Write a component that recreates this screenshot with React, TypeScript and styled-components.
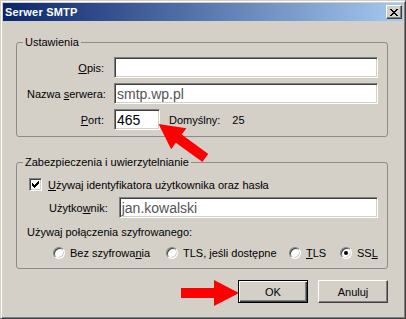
import React from "react";
import styled, {createGlobalStyle} from "styled-components";

//=============== GLOBAL ==================
const GlobalStyle = createGlobalStyle`
  html, body {
    margin: 0;
    padding: 0;
    background: #d4d0c8;
  }
  body {
    font-family: "Liberation Sans", Arial, sans-serif;
    font-size: 11px;
    color: #000;
  }
  * {
    box-sizing: border-box;
  }
`;

//=============== STYLED ==================
const Window = styled.div`
  position: relative;
  width: 406px;
  height: 319px;
  padding: 2px;
  background: #d4d0c8;
  border: 1px solid;
  border-color: #d4d0c8 #404040 #404040 #d4d0c8;
  box-shadow: inset 1px 1px #fff, inset -1px -1px #808080;
  display: flex;
  flex-direction: column;
`;

const TitleBar = styled.div`
  height: 18px;
  display: flex;
  align-items: center;
  justify-content: space-between;
  padding: 0 1px 0 2px;
  background: linear-gradient(to right, #0a246a, #a6caf0);
`;

const Title = styled.span`
  color: #fff;
  font-weight: bold;
  font-size: 11px;
  letter-spacing: 0.2px;
`;

const CloseButton = styled.div`
  width: 16px;
  height: 14px;
  display: flex;
  align-items: center;
  justify-content: center;
  background: #d4d0c8;
  border: 1px solid;
  border-color: #fff #404040 #404040 #fff;
  box-shadow: inset -1px -1px #808080;
`;

const Content = styled.div`
  padding: 15px 15px 0 13px;
  display: flex;
  flex-direction: column;
`;

const GroupBox = styled.fieldset<{ $gap?: number }>`
  margin: ${p => p.$gap ?? 0}px 0 0 0;
  padding: 0;
  min-width: 0;
  width: 372px;
  border: 1px solid #8c8c8c;
  border-radius: 3px;
`;

const Legend = styled.legend`
  margin-left: 6px;
  padding: 0 2px;
  line-height: 13px;
  font-size: 11px;
`;

const ServerGrid = styled.div`
  display: grid;
  grid-template-columns: 77px 1fr;
  column-gap: 10px;
  row-gap: 5px;
  padding: 8px 9px 6px 10px;
  align-items: center;
`;

const Label = styled.label`
  text-align: right;
  white-space: nowrap;
`;

const TextBox = styled.div<{ $width?: number; $dim?: boolean }>`
  height: 21px;
  width: ${p => (p.$width ? `${p.$width}px` : "auto")};
  flex: ${p => (p.$width ? "none" : "1")};
  display: flex;
  align-items: center;
  padding: 0 2px;
  background: #fff;
  border: 1px solid;
  border-color: #808080 #fff #fff #808080;
  box-shadow: inset 1px 1px #404040, inset -1px -1px #d4d0c8;
  font-size: 14px;
  color: ${p => (p.$dim ? "#555" : "#000")};
  white-space: nowrap;
  overflow: hidden;
`;

const PortRow = styled.div`
  display: flex;
  align-items: center;
`;

const DefaultText = styled.span`
  margin-left: 9px;
`;

const DefaultValue = styled.span`
  margin-left: 12px;
`;

const SecurityBody = styled.div`
  display: flex;
  flex-direction: column;
  padding: 9px 9px 9px 10px;
`;

const CheckRow = styled.div`
  display: flex;
  align-items: center;
  height: 13px;
  margin-left: 2px;
  gap: 6px;
`;

const CheckBox = styled.div`
  width: 13px;
  height: 13px;
  display: flex;
  align-items: center;
  justify-content: center;
  background: #fff;
  border: 1px solid;
  border-color: #808080 #fff #fff #808080;
  box-shadow: inset 1px 1px #404040, inset -1px -1px #d4d0c8;
`;

const UserRow = styled.div`
  display: flex;
  align-items: center;
  margin: 6px 0 0 22px;
  gap: 11px;
`;

const PlainLine = styled.div`
  height: 13px;
  line-height: 13px;
  margin-top: 8px;
`;

const RadioRow = styled.div`
  display: grid;
  grid-template-columns: 113px 123px 51px auto;
  align-items: center;
  margin: 7px 0 0 26px;
  height: 13px;
`;

const RadioItem = styled.label`
  display: flex;
  align-items: center;
  gap: 5px;
  white-space: nowrap;
`;

const RadioDot = styled.span<{ $checked?: boolean }>`
  position: relative;
  width: 12px;
  height: 12px;
  flex: none;
  border-radius: 50%;
  background: #fff;
  border: 1px solid;
  border-color: #808080 #fff #fff #808080;
  box-shadow: inset 1px 1px #404040, inset -1px -1px #d4d0c8;
  &::after {
    content: "";
    display: ${p => (p.$checked ? "block" : "none")};
    position: absolute;
    left: 3px;
    top: 3px;
    width: 4px;
    height: 4px;
    border-radius: 50%;
    background: #000;
  }
`;

const ButtonRow = styled.div`
  display: flex;
  justify-content: flex-end;
  gap: 10px;
  margin-top: 11px;
`;

const Button = styled.button<{ $default?: boolean }>`
  width: 70px;
  height: 23px;
  padding: 0;
  font-family: "Liberation Sans", Arial, sans-serif;
  font-size: 11px;
  font-weight: 400;
  color: #000;
  background: #d4d0c8;
  border: 1px solid;
  border-color: ${p => (p.$default ? "#000" : "#fff #404040 #404040 #fff")};
  box-shadow: ${p =>
    p.$default
      ? "inset 1px 1px #fff, inset -1px -1px #404040, inset -2px -2px #808080"
      : "inset -1px -1px #808080"};
`;

const Arrow = styled.svg<{ $x: number; $y: number; $angle: number }>`
  position: absolute;
  left: ${p => p.$x}px;
  top: ${p => p.$y}px;
  width: 58px;
  height: 26px;
  transform: rotate(${p => p.$angle}deg);
  transform-origin: 29px 13px;
  pointer-events: none;
`;

//=============== PARTS ==================
const CloseGlyph = () => (
    <svg width="8" height="7" viewBox="0 0 8 7" shapeRendering="crispEdges">
        <path
            d="M0 0h2v1h-2z M6 0h2v1h-2z M1 1h2v1h-2z M5 1h2v1h-2z M2 2h4v1h-4z M3 3h2v1h-2z M2 4h4v1h-4z M1 5h2v1h-2z M5 5h2v1h-2z M0 6h2v1h-2z M6 6h2v1h-2z"
            fill="#000"
        />
    </svg>
);

const CheckGlyph = () => (
    <svg width="7" height="7" viewBox="0 0 7 7" shapeRendering="crispEdges">
        <path
            d="M6 0h1v1h-1z M5 1h2v1h-2z M0 2h1v1h-1z M4 2h3v1h-3z M0 3h2v1h-2z M3 3h3v1h-3z M0 4h5v1h-5z M1 5h3v1h-3z M2 6h1v1h-1z"
            fill="#000"
        />
    </svg>
);

const RedArrow: React.FC<{ x: number; y: number; angle: number }> = ({x, y, angle}) => (
    <Arrow $x={x} $y={y} $angle={angle} viewBox="0 0 58 26">
        <polygon points="0,8 33,8 33,0 58,13 33,26 33,18 0,18" fill="#ff0000"/>
    </Arrow>
);

//============== COMPONENT =====================
const App: React.FC = () => {
    return (
        <>
            <GlobalStyle/>
            <Window>
                <TitleBar>
                    <Title>Serwer SMTP</Title>
                    <CloseButton><CloseGlyph/></CloseButton>
                </TitleBar>

                <Content>
                    <GroupBox>
                        <Legend>Ustawienia</Legend>
                        <ServerGrid>
                            <Label><u>O</u>pis:</Label>
                            <TextBox/>
                            <Label>Nazwa <u>s</u>erwera:</Label>
                            <TextBox $dim>smtp.wp.pl</TextBox>
                            <Label><u>P</u>ort:</Label>
                            <PortRow>
                                <TextBox $width={46}>465</TextBox>
                                <DefaultText>Domyślny:</DefaultText>
                                <DefaultValue>25</DefaultValue>
                            </PortRow>
                        </ServerGrid>
                    </GroupBox>

                    <GroupBox $gap={19}>
                        <Legend>Zabezpieczenia i uwierzytelnianie</Legend>
                        <SecurityBody>
                            <CheckRow>
                                <CheckBox><CheckGlyph/></CheckBox>
                                <span><u>U</u>żywaj identyfikatora użytkownika oraz hasła</span>
                            </CheckRow>
                            <UserRow>
                                <span>Użytko<u>w</u>nik:</span>
                                <TextBox $dim>jan.kowalski</TextBox>
                            </UserRow>
                            <PlainLine>Używaj połączenia szyfrowanego:</PlainLine>
                            <RadioRow>
                                <RadioItem><RadioDot/><span>Bez szyfrowa<u>n</u>ia</span></RadioItem>
                                <RadioItem><RadioDot/><span>TLS, <u>j</u>eśli dostępne</span></RadioItem>
                                <RadioItem><RadioDot/><span><u>T</u>LS</span></RadioItem>
                                <RadioItem><RadioDot $checked/><span>SS<u>L</u></span></RadioItem>
                            </RadioRow>
                        </SecurityBody>
                    </GroupBox>

                    <ButtonRow>
                        <Button $default>OK</Button>
                        <Button>Anuluj</Button>
                    </ButtonRow>
                </Content>

                <RedArrow x={152} y={127} angle={216}/>
                <RedArrow x={180} y={279} angle={0}/>
            </Window>
        </>
    );
};
export default App;
